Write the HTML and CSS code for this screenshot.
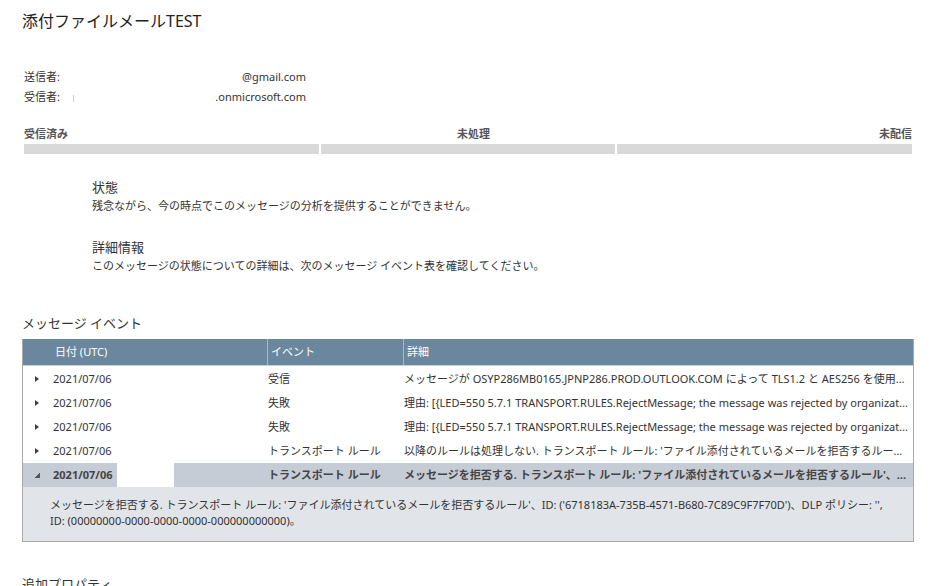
FILE: index.html
```html
<!DOCTYPE html>
<html lang="ja">
<head>
  <meta charset="UTF-8" />
  <title>メッセージの追跡</title>
  <link rel="stylesheet" href="styles.css">
</head>
<body>
  <h1 class="title">添付ファイルメールTEST</h1>

  <div class="addresses">
    <div class="addr-row"><span>送信者:</span><span>@gmail.com</span></div>
    <div class="addr-row"><span>受信者:<i class="redact-mark"></i></span><span>.onmicrosoft.com</span></div>
  </div>

  <div class="progress">
    <div class="progress-labels">
      <span>受信済み</span>
      <span>未処理</span>
      <span>未配信</span>
    </div>
    <div class="progress-bars">
      <div class="bar"></div>
      <div class="bar"></div>
      <div class="bar"></div>
    </div>
  </div>

  <div class="status">
    <div class="status-block">
      <h3>状態</h3>
      <p>残念ながら、今の時点でこのメッセージの分析を提供することができません。</p>
    </div>
    <div class="status-block">
      <h3>詳細情報</h3>
      <p>このメッセージの状態についての詳細は、次のメッセージ イベント表を確認してください。</p>
    </div>
  </div>

  <h2 class="section-title">メッセージ イベント</h2>

  <div class="events">
    <div class="ev-row ev-head">
      <div class="cell first">日付 (UTC)</div>
      <div class="cell">イベント</div>
      <div class="cell">詳細</div>
    </div>
    <div class="ev-row">
      <div class="cell first"><span class="arrow"></span>2021/07/06</div>
      <div class="cell">受信</div>
      <div class="cell">メッセージが OSYP286MB0165.JPNP286.PROD.OUTLOOK.COM によって TLS1.2 と AES256 を使用して受信されました。</div>
    </div>
    <div class="ev-row">
      <div class="cell first"><span class="arrow"></span>2021/07/06</div>
      <div class="cell">失敗</div>
      <div class="cell">理由: [{LED=550 5.7.1 TRANSPORT.RULES.RejectMessage; the message was rejected by organization policy}]</div>
    </div>
    <div class="ev-row">
      <div class="cell first"><span class="arrow"></span>2021/07/06</div>
      <div class="cell">失敗</div>
      <div class="cell">理由: [{LED=550 5.7.1 TRANSPORT.RULES.RejectMessage; the message was rejected by organization policy}]</div>
    </div>
    <div class="ev-row">
      <div class="cell first"><span class="arrow"></span>2021/07/06</div>
      <div class="cell">トランスポート ルール</div>
      <div class="cell">以降のルールは処理しない. トランスポート ルール: 'ファイル添付されているメールを拒否するルール'、ID: ('6718183A-735B-4571-B680-7C89C9F7F70D')</div>
    </div>
    <div class="ev-row selected">
      <div class="cell first"><span class="arrow open"></span>2021/07/06<span class="redact"></span></div>
      <div class="cell">トランスポート ルール</div>
      <div class="cell">メッセージを拒否する. トランスポート ルール: 'ファイル添付されているメールを拒否するルール'、ID: ('6718183A-735B-4571-B680-7C89C9F7F70D')</div>
    </div>
    <div class="ev-detail">
      メッセージを拒否する. トランスポート ルール: 'ファイル添付されているメールを拒否するルール'、ID: ('6718183A-735B-4571-B680-7C89C9F7F70D')、DLP ポリシー: '',<br>
      ID: (00000000-0000-0000-0000-000000000000)。
    </div>
  </div>

  <h2 class="section-title more">追加プロパティ</h2>
</body>
</html>
```

FILE: styles.css
```css
body {
  margin: 0;
  padding: 0 25px 0 22px;
  font-family: "Noto Sans", "Noto Sans CJK JP", sans-serif;
  color: #333;
  background: #fff;
  font-size: 11px;
}

.title {
  margin: 0;
  padding-top: 9px;
  font-size: 16px;
  font-weight: normal;
  line-height: 24px;
  color: #222;
}

.addresses {
  margin-top: 34px;
  margin-left: 2px;
  width: 282px;
}

.addr-row {
  display: flex;
  justify-content: space-between;
  line-height: 20px;
  font-size: 11px;
  color: #333;
}

.redact-mark {
  display: inline-block;
  width: 1px;
  height: 7px;
  margin-left: 13px;
  background: #ccc;
  vertical-align: middle;
}

.progress {
  margin-top: 19px;
  margin-left: 2px;
  width: 888px;
}

.progress-labels {
  display: flex;
  justify-content: space-between;
  font-size: 11px;
  font-weight: bold;
  color: #555;
  line-height: 16px;
}

.progress-bars {
  display: flex;
  gap: 2px;
  margin-top: 2px;
}

.bar {
  flex: 1;
  height: 10px;
  background: #d9d9d9;
}

.status {
  margin-top: 23px;
  margin-left: 70px;
}

.status-block {
  margin-bottom: 22px;
}

.status-block h3 {
  margin: 0;
  font-size: 13px;
  font-weight: normal;
  line-height: 20px;
  color: #333;
}

.status-block p {
  margin: 0;
  font-size: 11px;
  line-height: 18px;
}

.section-title {
  margin: 0;
  margin-top: 38px;
  font-size: 13px;
  font-weight: normal;
  line-height: 20px;
  color: #333;
}

.events {
  margin-top: 6px;
  width: 890px;
  border: 1px solid #a8a8a8;
  border-top: none;
}

.ev-row {
  display: grid;
  grid-template-columns: 244px 136px 1fr;
  height: 24px;
  line-height: 24px;
  font-size: 11px;
  color: #333;
}

.ev-row .cell {
  white-space: nowrap;
  overflow: hidden;
  text-overflow: ellipsis;
  padding-left: 1px;
  padding-right: 5px;
  position: relative;
}

.ev-row .cell.first {
  padding-left: 12px;
}

.ev-head {
  height: 26px;
  line-height: 26px;
  background: #6b879e;
  color: #fff;
  border-bottom: 1px solid #c9d1d9;
}

.ev-head .cell {
  padding-left: 3px;
  border-left: 1px solid #a9b8c6;
}

.ev-head .cell.first {
  padding-left: 32px;
  border-left: none;
}

.ev-row:nth-child(2) {
  margin-top: 1px;
}

.arrow {
  display: inline-block;
  vertical-align: middle;
  width: 0;
  height: 0;
  border-top: 3.5px solid transparent;
  border-bottom: 3.5px solid transparent;
  border-left: 4px solid #444;
  margin-right: 14px;
  margin-top: -2px;
}

.arrow.open {
  border: none;
  width: 5px;
  height: 5px;
  background: linear-gradient(to top left, #555 50%, transparent 50%);
  margin-right: 13px;
  margin-top: -1px;
}

.selected {
  background: #c6ccd6;
  font-weight: bold;
  color: #444;
}

.redact {
  position: absolute;
  left: 94px;
  top: 0;
  width: 57px;
  height: 100%;
  background: #fff;
}

.ev-detail {
  background: #e1e4e9;
  padding: 10px 27px 12px;
  font-size: 11px;
  line-height: 16px;
  color: #333;
}

.more {
  margin-top: 32px;
}
```
